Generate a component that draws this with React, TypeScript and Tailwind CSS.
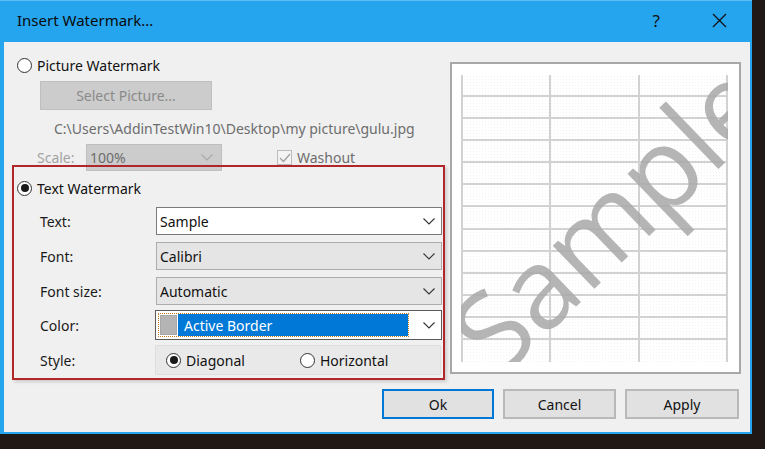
import React from "react";

function Radio({ checked }: { checked?: boolean }) {
  return (
    <span className="w-[15px] h-[15px] rounded-full border border-[#333333] bg-white flex items-center justify-center shrink-0">
      {checked && <span className="w-[8px] h-[8px] rounded-full bg-[#1a1a1a]" />}
    </span>
  );
}

function Chevron({ color = "#333333" }: { color?: string }) {
  return (
    <svg width="12" height="7" viewBox="0 0 12 7" className="shrink-0">
      <polyline points="0.5,0.5 6,6 11.5,0.5" fill="none" stroke={color} strokeWidth="1.1" />
    </svg>
  );
}

function Row({ label, children, mt }: { label: string; children: React.ReactNode; mt: string }) {
  return (
    <div className={`flex items-center ${mt}`}>
      <span className="ml-[36px] w-[116px] text-[14px] text-[#1a1a1a]">{label}</span>
      {children}
    </div>
  );
}

export default function App() {
  const cells = Array.from({ length: 39 }, (_, i) => i);
  return (
    <div className="w-[765px] h-[449px] bg-[#201815] overflow-hidden font-['Noto_Sans',sans-serif]">
      <div className="w-[752px] h-[434px] bg-[#26a5ef] flex flex-col border-t border-[#5cbcf3]">
        {/* title bar */}
        <div className="h-[41px] flex items-center shrink-0">
          <span className="ml-[17px] text-[15px] text-[#0a0a0a] mt-[-2px]">Insert Watermark...</span>
          <span className="ml-auto text-[17px] text-[#111] mt-[-2px]">?</span>
          <svg width="15" height="15" viewBox="0 0 15 15" className="ml-[52px] mr-[25px] mt-[-2px]">
            <path d="M1 1 L14 14 M14 1 L1 14" stroke="#111" strokeWidth="1.3" />
          </svg>
        </div>
        {/* client */}
        <div className="flex-1 bg-[#f0f0f0] ml-[4px] mr-[2px] mb-[2px] relative flex flex-col">
          <div className="flex flex-row items-start h-[334px]">
            {/* left column */}
            <div className="w-[442px] flex flex-col">
              <div className="mt-[14px] h-[18px] flex items-center ml-[13px] gap-[5px]">
                <Radio />
                <span className="text-[14px] text-[#111]">Picture Watermark</span>
              </div>
              <div className="mt-[7px] ml-[36px] w-[172px] h-[29px] bg-[#cccccc] border border-[#bfbfbf] flex items-center justify-center text-[14px] text-[#8a8a8a]">
                Select Picture...
              </div>
              <div className="mt-[8px] h-[20px] ml-[50px] flex items-center text-[14px] text-[#6d6d6d] whitespace-nowrap">
                C:\Users\AddinTestWin10\Desktop\my picture\gulu.jpg
              </div>
              <div className="mt-[6px] h-[27px] flex items-center">
                <span className="ml-[33px] w-[49px] text-[14px] text-[#a3a3a3]">Scale:</span>
                <div className="w-[136px] h-[27px] bg-[#cccccc] border border-[#bfbfbf] flex items-center pl-[3px] pr-[8px]">
                  <span className="text-[14px] text-[#6d6d6d] flex-1">100%</span>
                  <Chevron color="#a8a8a8" />
                </div>
                <span className="ml-[55px] w-[15px] h-[15px] border border-[#bcbcbc] bg-[#f4f4f4] flex items-center justify-center">
                  <svg width="12" height="10" viewBox="0 0 12 10">
                    <polyline points="1,5 4.5,8.5 11,1" fill="none" stroke="#a0a0a0" strokeWidth="1.3" />
                  </svg>
                </span>
                <span className="ml-[5px] text-[14px] text-[#6d6d6d]">Washout</span>
              </div>
              <div className="mt-[8px] h-[18px] flex items-center ml-[13px] gap-[5px]">
                <Radio checked />
                <span className="text-[14px] text-[#111]">Text Watermark</span>
              </div>
              <Row label="Text:" mt="mt-[10px]">
                <div className="w-[286px] h-[28px] bg-white border border-[#7a7a7a] flex items-center pl-[3px] pr-[6px]">
                  <span className="text-[14px] text-[#111] flex-1">Sample</span>
                  <Chevron />
                </div>
              </Row>
              <Row label="Font:" mt="mt-[7px]">
                <div className="w-[286px] h-[28px] bg-[#e5e5e5] border border-[#acacac] flex items-center pl-[3px] pr-[6px]">
                  <span className="text-[14px] text-[#111] flex-1">Calibri</span>
                  <Chevron />
                </div>
              </Row>
              <Row label="Font size:" mt="mt-[7px]">
                <div className="w-[286px] h-[28px] bg-[#e5e5e5] border border-[#acacac] flex items-center pl-[3px] pr-[6px]">
                  <span className="text-[14px] text-[#111] flex-1">Automatic</span>
                  <Chevron />
                </div>
              </Row>
              <Row label="Color:" mt="mt-[5px]">
                <div className="w-[287px] h-[30px] bg-white border border-[#5a5a5a] flex items-center pl-[2px] pr-[6px] ml-[-1px]">
                  <div className="flex-1 h-[24px] flex items-stretch border border-dotted border-[#c47a1e] mr-[14px]">
                    <div className="w-[19px] bg-white flex items-center justify-center">
                      <span className="w-[17px] h-[20px] bg-[#b4b4b4] border border-[#a8a8a8]" />
                    </div>
                    <div className="flex-1 bg-[#0078d7] flex items-center pl-[6px] text-[14px] text-white">Active Border</div>
                  </div>
                  <Chevron />
                </div>
              </Row>
              <div className="flex items-center mt-[5px]">
                <span className="ml-[36px] w-[115px] text-[14px] text-[#1a1a1a]">Style:</span>
                <div className="w-[286px] h-[30px] bg-[#e9e9e9] border border-[#dedede] flex items-center">
                  <span className="ml-[10px] flex items-center gap-[5px]">
                    <Radio checked />
                    <span className="text-[14px] text-[#111]">Diagonal</span>
                  </span>
                  <span className="ml-[55px] flex items-center gap-[5px]">
                    <Radio />
                    <span className="text-[14px] text-[#111]">Horizontal</span>
                  </span>
                </div>
              </div>
            </div>
            {/* preview */}
            <div className="ml-[4px] mt-[20px] w-[291px] h-[312px] border-2 border-[#a8a8a8] bg-white shrink-0">
              <div className="ml-[9px] mt-[11px] w-[267px] h-[287px] relative overflow-hidden">
                <div className="w-full h-full grid grid-cols-3 grid-rows-[repeat(13,minmax(0,1fr))] border-l-2 border-[#d2d2d2] bg-[radial-gradient(#f3f3f3_0.6px,transparent_0.8px)] bg-[length:3px_3px]">
                  {cells.map((i) =>
                    i >= 36 ? (
                      <div key={i} className="border-r-2 border-[#d2d2d2]" />
                    ) : (
                      <div key={i} className="border-r-2 border-b-2 border-[#d2d2d2]" />
                    )
                  )}
                </div>
                <div className="absolute left-[147px] top-[141px] -translate-x-1/2 -translate-y-1/2 -rotate-[44deg] whitespace-nowrap leading-none text-[112px] text-[#a9a9a9] opacity-85 font-['Open_Sans',sans-serif]">
                  Sample
                </div>
              </div>
            </div>
          </div>
          {/* buttons */}
          <div className="mt-[13px] flex justify-end gap-[8px] pr-[11px]">
            <div className="w-[112px] h-[30px] bg-[#e1e1e1] border-2 border-[#0078d7] flex items-center justify-center text-[14px] text-[#111]">Ok</div>
            <div className="w-[113px] h-[30px] bg-[#e1e1e1] border-2 border-[#b9b9b9] flex items-center justify-center text-[14px] text-[#111] ml-[1px]">Cancel</div>
            <div className="w-[114px] h-[30px] bg-[#e1e1e1] border-2 border-[#b9b9b9] flex items-center justify-center text-[14px] text-[#111] ml-[1px]">Apply</div>
          </div>
          {/* red annotation box */}
          <div className="absolute left-[8px] top-[123px] w-[433px] h-[215px] border-2 border-[#b0262b] shadow-[2px_2px_3px_rgba(0,0,0,0.15)] pointer-events-none" />
        </div>
      </div>
    </div>
  );
}
